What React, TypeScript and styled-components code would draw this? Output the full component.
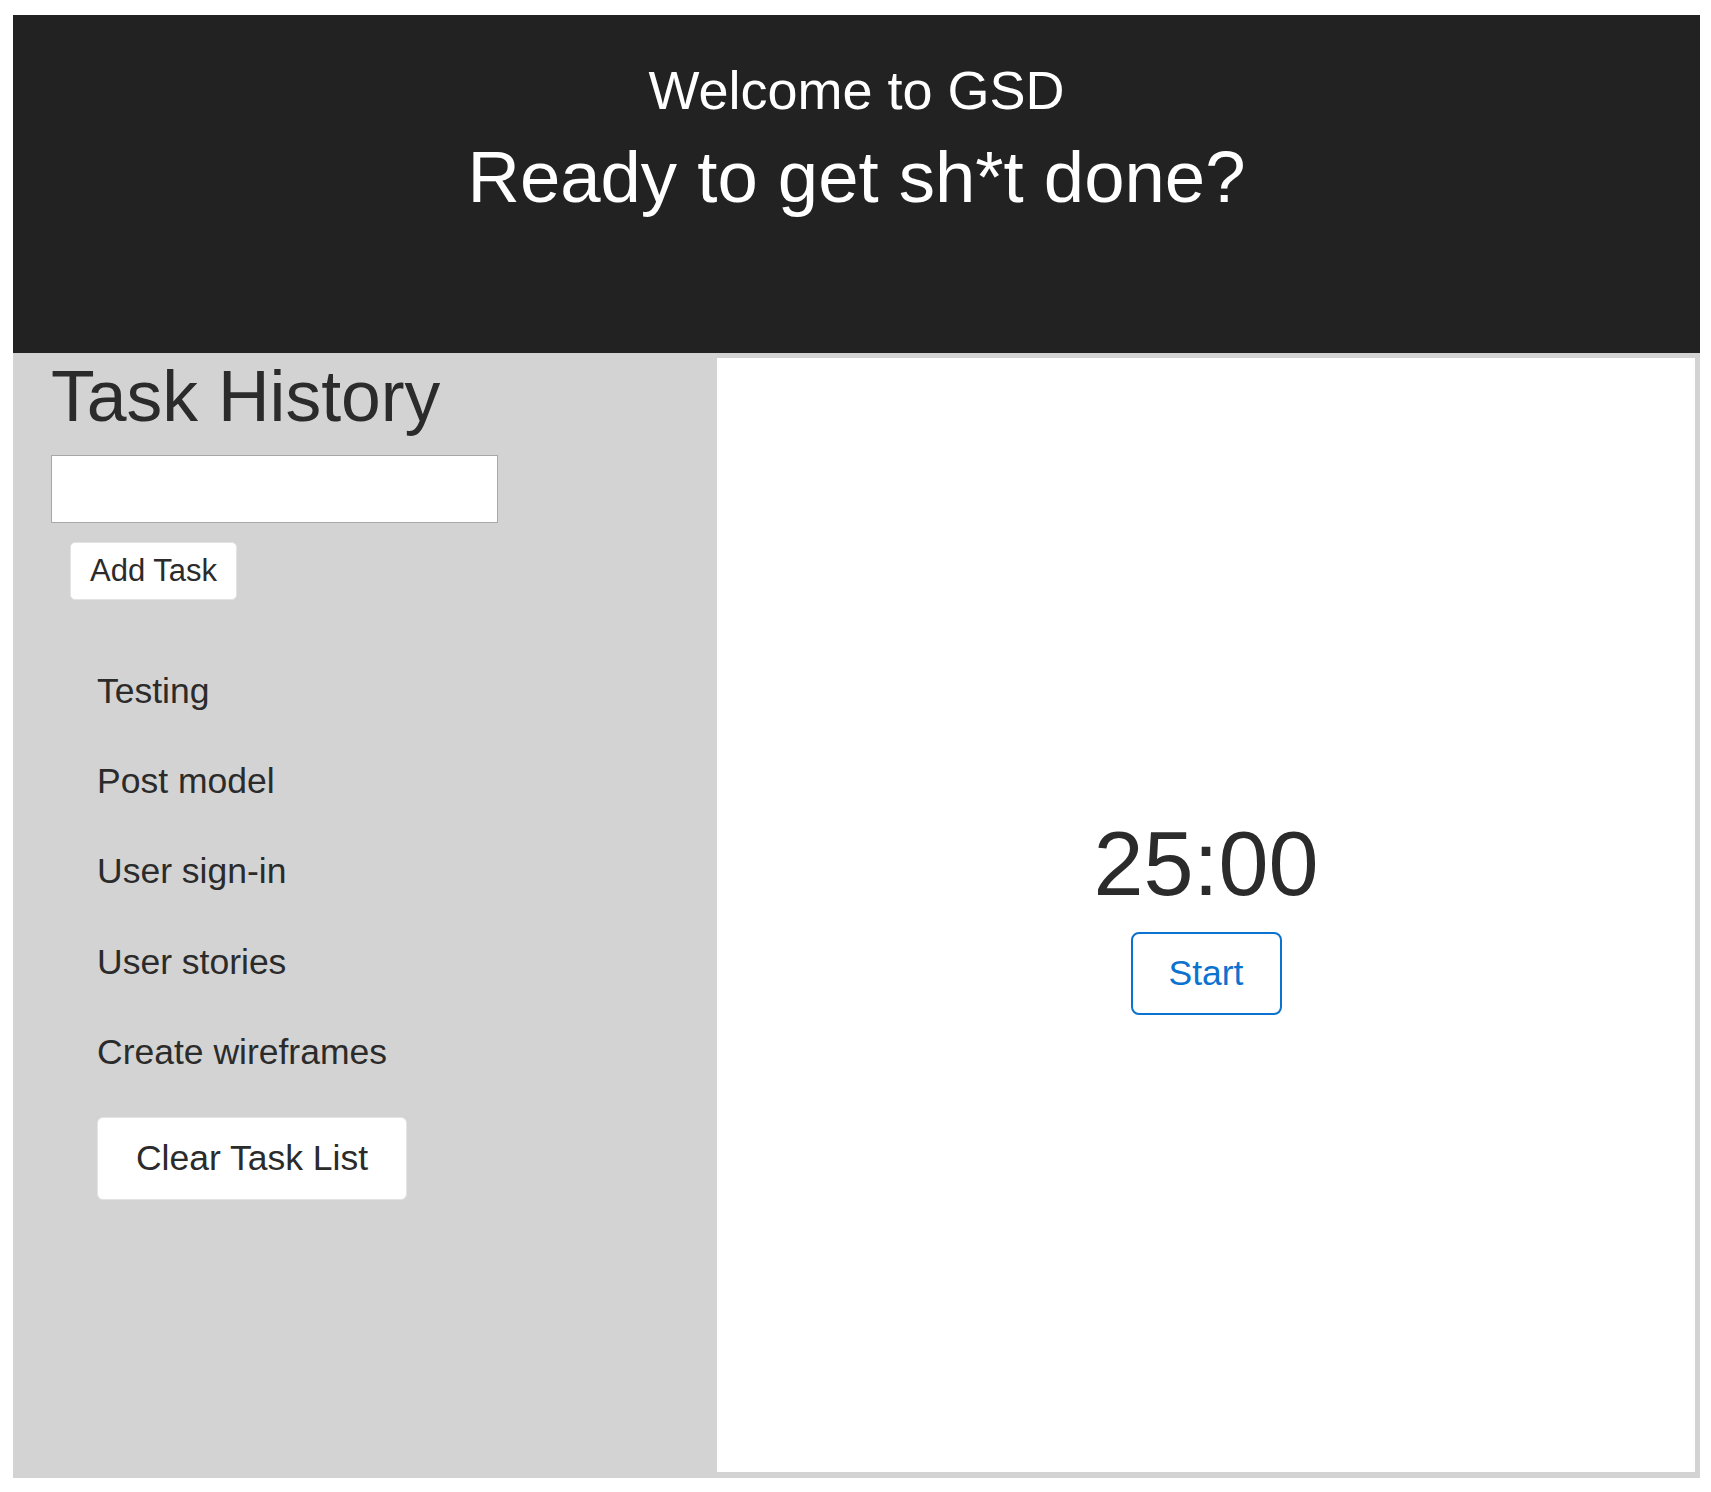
import React from "react";
import styled, { createGlobalStyle } from "styled-components";

const GlobalStyle = createGlobalStyle`
  html, body {
    margin: 0;
    padding: 0;
    background: #ffffff;
  }
  body {
    font-family: "Liberation Sans", Arial, Helvetica, sans-serif;
    color: #2b2b2b;
  }
  * { box-sizing: border-box; }
`;

const Page = styled.div`
  width: 1687px;
  margin: 15px 11px 14px 13px;
  display: flex;
  flex-direction: column;
`;

const Header = styled.header`
  height: 338px;
  background: #222222;
  color: #ffffff;
  text-align: center;
  padding-top: 43px;
  display: flex;
  flex-direction: column;
  align-items: center;
`;

const Welcome = styled.h2`
  margin: 0;
  font-size: 54px;
  line-height: 1.2;
  font-weight: 400;
`;

const Tagline = styled.h1`
  margin: 10px 0 0;
  font-size: 72.5px;
  line-height: 1.2;
  font-weight: 400;
`;

const Main = styled.main`
  height: 1125px;
  background: #d3d3d3;
  display: grid;
  grid-template-columns: 704px 1fr;
`;

const Sidebar = styled.section`
  padding-left: 38px;
  display: flex;
  flex-direction: column;
  align-items: flex-start;
`;

const SideTitle = styled.h2`
  margin: 1px 0 0;
  font-size: 71.5px;
  line-height: 1.2;
  font-weight: 400;
  color: #2b2b2b;
`;

const TaskInput = styled.input`
  margin-top: 15px;
  width: 447px;
  height: 68px;
  border: 1px solid #a8a8a8;
  background: #ffffff;
  font-family: inherit;
  font-size: 30px;
  padding: 0 10px;
  outline: none;
`;

const LightButton = styled.button<{ $w: number; $h: number; $fs: number }>`
  width: ${(p) => p.$w}px;
  height: ${(p) => p.$h}px;
  font-family: "Liberation Sans", Arial, sans-serif;
  font-size: ${(p) => p.$fs}px;
  color: #2b2b2b;
  background: #ffffff;
  border: 1px solid #e3e3e3;
  border-radius: 6px;
  padding: 0;
  cursor: pointer;
  display: flex;
  align-items: center;
  justify-content: center;
`;

const AddButton = styled(LightButton)`
  margin: 19px 0 0 19px;
  border-radius: 5px;
`;

const TaskList = styled.ul`
  list-style: none;
  margin: 70px 0 0 46px;
  padding: 0;
  display: flex;
  flex-direction: column;
  gap: 47.7px;
`;

const TaskItem = styled.li`
  font-size: 35.5px;
  line-height: 1.2;
  color: #2b2b2b;
`;

const ClearButton = styled(LightButton)`
  margin: 43px 0 0 46px;
`;

const TimerPanel = styled.section`
  background: #ffffff;
  margin: 5px 5px 6px 0;
  padding-bottom: 5px;
  display: flex;
  flex-direction: column;
  align-items: center;
  justify-content: center;
`;

const Clock = styled.div`
  font-size: 90px;
  line-height: 1.2;
  color: #2b2b2b;
`;

const StartButton = styled.button`
  margin-top: 14px;
  width: 151px;
  height: 83px;
  background: #ffffff;
  border: 2px solid #0b73cf;
  border-radius: 8px;
  color: #0b73cf;
  font-family: "Liberation Sans", Arial, sans-serif;
  font-size: 35.5px;
  padding: 0;
  cursor: pointer;
`;

const tasks = ["Testing", "Post model", "User sign-in", "User stories", "Create wireframes"];

export default function App() {
  return (
    <>
      <GlobalStyle />
      <Page>
        <Header>
          <Welcome>Welcome to GSD</Welcome>
          <Tagline>Ready to get sh*t done?</Tagline>
        </Header>
        <Main>
          <Sidebar>
            <SideTitle>Task History</SideTitle>
            <TaskInput type="text" />
            <AddButton $w={167} $h={58} $fs={31}>Add Task</AddButton>
            <TaskList>
              {tasks.map((t) => (
                <TaskItem key={t}>{t}</TaskItem>
              ))}
            </TaskList>
            <ClearButton $w={310} $h={83} $fs={35.5}>Clear Task List</ClearButton>
          </Sidebar>
          <TimerPanel>
            <Clock>25:00</Clock>
            <StartButton>Start</StartButton>
          </TimerPanel>
        </Main>
      </Page>
    </>
  );
}
